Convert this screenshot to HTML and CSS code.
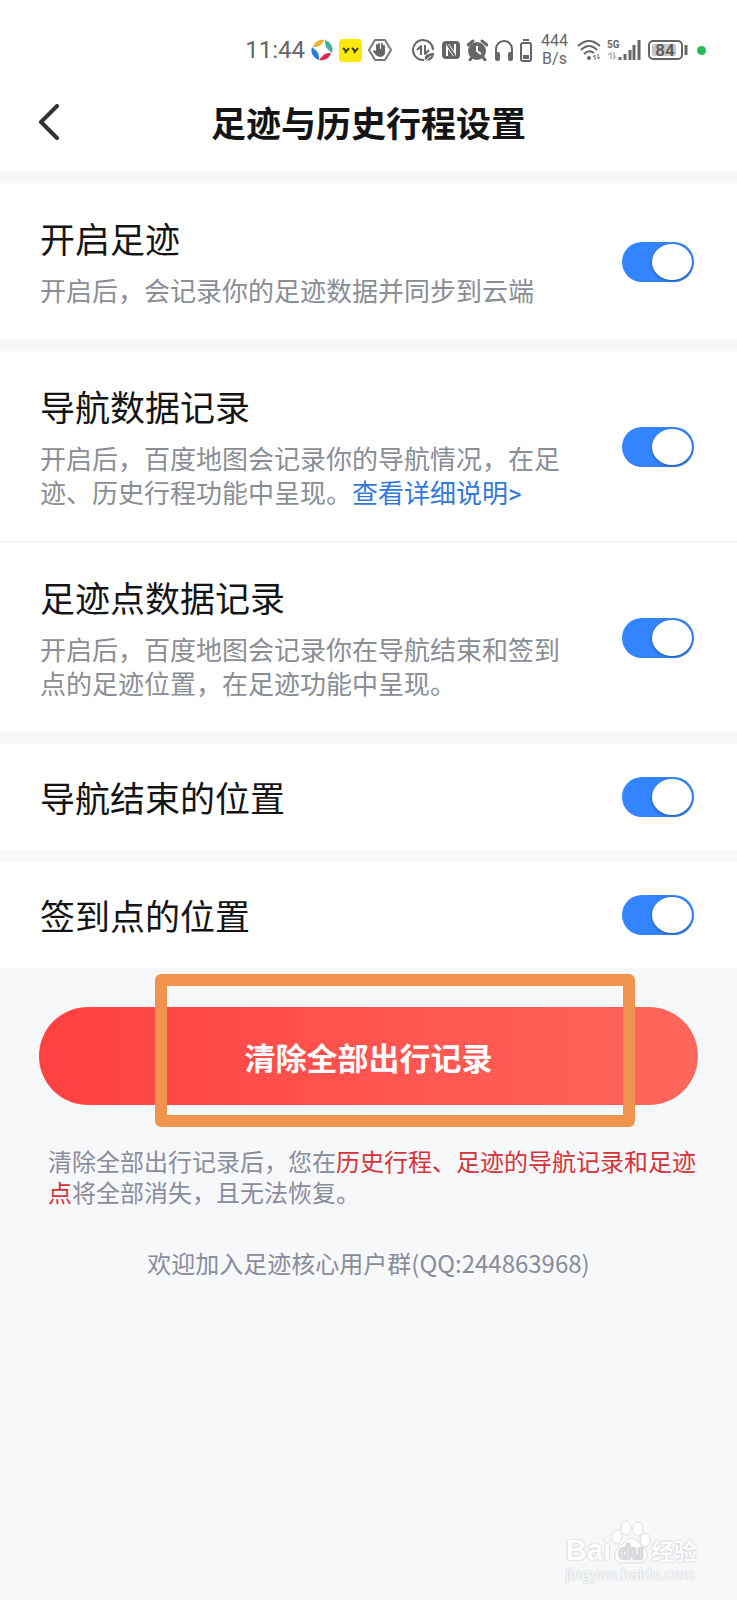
FILE: index.html
```
<!DOCTYPE html>
<html lang="zh-CN">
<head>
    <meta charset="UTF-8">
    <meta name="viewport" content="width=device-width, initial-scale=1.0">
    <title>足迹与历史行程设置</title>
    <link rel="stylesheet" href="styles.css">
</head>
<body>

<!-- Status bar -->
<div class="status-bar">
    <div class="status-group">
        <span class="clock">11:44</span>
        <svg width="22" height="22" viewBox="0 0 22 22">
            <path d="M2 8C4 2 9 0 14 1C12 3 10 6 8 7C6 8 4 8 2 8Z" fill="#e8b62c"/>
            <path d="M14 1C20 3 23 9 21 14C19 12 16 10 15 8C14 6 14 3 14 1Z" fill="#3fb39b"/>
            <path d="M20 14C18 20 13 22 8 21C10 19 12 16 14 15C16 14 18 14 20 14Z" fill="#e0224f"/>
            <path d="M8 21C2 19-1 13 1 8C3 10 6 12 7 14C8 16 8 19 8 21Z" fill="#2a7de0"/>
        </svg>
        <svg width="23" height="23" viewBox="0 0 23 23">
            <rect width="23" height="23" rx="4" fill="#fbe90c"/>
            <path d="M4 9L7 12M10 9L6 14M13 9L16 12M19 9L15 14" fill="none" stroke="#3a3210" stroke-width="2"/>
        </svg>
        <svg width="24" height="22" viewBox="0 0 24 22">
            <path d="M7 1H17L23 11L17 21H7L1 11Z" fill="none" stroke="#777" stroke-width="2" stroke-linejoin="round"/>
            <path d="M9 6V12M11 5V12M14 5V12M16 7V12" stroke="#666" stroke-width="2" stroke-linecap="round"/>
            <path d="M8 10H17V14Q16 18 12 18Q9 18 7 15L5 12L6 11L8 12Z" fill="#666"/>
        </svg>
    </div>
    <div class="status-group">
        <svg width="23" height="23" viewBox="0 0 23 23" fill="none" stroke="#666" stroke-width="2">
            <path d="M21 11A10 10 0 1 0 12 21"/>
            <path d="M5 11L9 7V16M13 6V15L17 11" stroke-linejoin="round"/>
            <path d="M13 21C12 16 16 14 22 14C22 20 17 23 13 21Z" fill="#666" stroke="none"/>
            <path d="M13 22L19 17" stroke="#fff" stroke-width="1"/>
        </svg>
        <svg width="20" height="20" viewBox="0 0 20 20">
            <rect x="1" y="1" width="18" height="18" rx="4" fill="#666"/>
            <path d="M5 4V16H7V9L12 16H15V4H13V11L8 4Z" fill="#fff"/>
            <path d="M6 4L14 16" stroke="#666" stroke-width="2"/>
        </svg>
        <svg width="21" height="22" viewBox="0 0 21 22">
            <circle cx="10" cy="12" r="9" fill="#666"/>
            <path d="M1 6L6 2M15 2L20 6M5 18L3 21M16 18L18 21" stroke="#666" stroke-width="3" stroke-linecap="round"/>
            <path d="M10 7V12L14 15" fill="none" stroke="#fff" stroke-width="2"/>
        </svg>
        <svg width="20" height="22" viewBox="0 0 20 22">
            <path d="M2 16V10A8 8 0 0 1 18 10V16" fill="none" stroke="#666" stroke-width="2"/>
            <rect x="1" y="13" width="5" height="9" rx="2" fill="#666"/>
            <rect x="14" y="13" width="5" height="9" rx="2" fill="#666"/>
        </svg>
        <svg width="12" height="23" viewBox="0 0 12 23">
            <path d="M3 1H9" stroke="#666" stroke-width="2"/>
            <rect x="1" y="4" width="10" height="18" rx="2" fill="none" stroke="#666" stroke-width="2"/>
            <rect x="3" y="16" width="6" height="4" fill="#666"/>
        </svg>
    </div>
    <span class="net-speed">444<br>B/s</span>
    <div class="status-group">
        <svg width="24" height="22" viewBox="0 0 24 22" fill="none" stroke="#666" stroke-width="2">
            <path d="M1 7Q12-3 23 7M4 11Q12 3 20 11M7 15Q12 10 17 14"/>
            <circle cx="12" cy="19" r="2" fill="#666" stroke="none"/>
            <path d="M16 18L18 16V21M21 15V20L23 18" stroke-width="1"/>
        </svg>
        <svg width="34" height="22" viewBox="0 0 34 22">
            <text x="0" y="9" class="net-type">5G</text>
            <path d="M1 16L4 14V20M7 13V19L9 17" fill="none" stroke="#c4c4c4" stroke-width="2"/>
            <path d="M13 18V21M18 15V21M23 11V21M27 6V21M32 1V21" stroke="#666" stroke-width="3"/>
        </svg>
    </div>
    <svg width="40" height="22" viewBox="0 0 40 22">
        <rect x="1" y="2" width="33" height="18" rx="4" fill="none" stroke="#666" stroke-width="2"/>
        <rect x="4" y="5" width="24" height="12" rx="2" fill="#c6c6c6"/>
        <path d="M38 6V16" stroke="#666" stroke-width="3"/>
        <text x="17" y="17" text-anchor="middle" class="battery-level">84</text>
    </svg>
    <span class="active-dot"></span>
</div>

<!-- Page header -->
<header class="page-header">
    <button class="back-btn" aria-label="返回">
        <svg width="22" height="36" viewBox="0 0 22 36">
            <path d="M19 2L3 18L19 34" fill="none" stroke="#333" stroke-width="4" stroke-linecap="round" stroke-linejoin="round"/>
        </svg>
    </button>
    <h1>足迹与历史行程设置</h1>
</header>

<!-- Settings -->
<main class="settings">
    <section class="card">
        <div class="row">
            <div class="row-text">
                <label class="row-title" for="footprint">开启足迹</label>
                <p class="row-desc">开启后，会记录你的足迹数据并同步到云端</p>
            </div>
            <input type="checkbox" class="switch" id="footprint" checked>
        </div>
    </section>

    <section class="card">
        <div class="row">
            <div class="row-text">
                <label class="row-title" for="navigation">导航数据记录</label>
                <p class="row-desc">开启后，百度地图会记录你的导航情况，在足迹、历史行程功能中呈现。<a href="#">查看详细说明&gt;</a></p>
            </div>
            <input type="checkbox" class="switch" id="navigation" checked>
        </div>
        <div class="row">
            <div class="row-text">
                <label class="row-title" for="points">足迹点数据记录</label>
                <p class="row-desc">开启后，百度地图会记录你在导航结束和签到点的足迹位置，在足迹功能中呈现。</p>
            </div>
            <input type="checkbox" class="switch" id="points" checked>
        </div>
    </section>

    <section class="card">
        <div class="row row-small">
            <label class="row-title" for="nav-end">导航结束的位置</label>
            <input type="checkbox" class="switch" id="nav-end" checked>
        </div>
    </section>

    <section class="card">
        <div class="row row-small">
            <label class="row-title" for="checkin">签到点的位置</label>
            <input type="checkbox" class="switch" id="checkin" checked>
        </div>
    </section>
</main>

<!-- Clear records -->
<div class="clear-box">
    <button class="clear-btn">清除全部出行记录</button>
    <div class="highlight"></div>
</div>
<p class="note">清除全部出行记录后，您在<span class="warn">历史行程、足迹的导航记录和足迹点</span>将全部消失，且无法恢复。</p>
<p class="contact">欢迎加入足迹核心用户群(QQ:244863968)</p>

<!-- Watermark -->
<footer class="watermark">
    <div class="brand">
        <span class="brand-latin">Bai</span>
        <svg width="40" height="44" viewBox="0 0 40 44" fill="#fff" stroke="#dcdde0" stroke-width="1">
            <ellipse cx="6" cy="17" rx="5" ry="7"/>
            <ellipse cx="15" cy="8" rx="5" ry="7"/>
            <ellipse cx="27" cy="9" rx="5" ry="7"/>
            <ellipse cx="34" cy="20" rx="5" ry="7"/>
            <path d="M20 18C25 18 28 24 34 29C38 34 36 42 29 43C24 43 20 42 15 43C7 44 2 40 4 33C5 27 14 23 16 20Q18 18 20 18Z"/>
            <text x="20" y="39" text-anchor="middle" class="brand-du">du</text>
        </svg>
        <span class="brand-cn">经验</span>
    </div>
    <span class="brand-url">jingyan.baidu.com</span>
</footer>

</body>
</html>
```

FILE: styles.css
```
* {
    box-sizing: border-box;
}
body {
    font-family: "Noto Sans CJK SC", "Noto Sans", sans-serif;
    margin: 0;
    min-height: 100vh;
    display: flex;
    flex-direction: column;
    background-color: #f7f8fa;
    color: #141414;
}
h1, p {
    margin: 0;
}

/* Status bar */
.status-bar {
    display: flex;
    align-items: center;
    justify-content: flex-end;
    gap: 7px;
    padding: 32px 31px 0 0;
    background-color: #fff;
    color: #666;
    font-family: Roboto, sans-serif;
}
.status-group {
    display: flex;
    align-items: center;
    gap: 6px;
}
.status-group:first-child {
    margin-right: 13px;
}
.clock {
    font-size: 24px;
    line-height: 24px;
}
.net-speed {
    padding: 0 2px;
    font-size: 16px;
    line-height: 18px;
    text-align: center;
}
.net-type {
    font: bold 10px Roboto, sans-serif;
    fill: #666;
}
.battery-level {
    font: 500 17px Roboto, sans-serif;
    fill: #555;
}
.active-dot {
    width: 9px;
    height: 9px;
    margin-left: 2px;
    border-radius: 50%;
    background-color: #22bb55;
}

/* Header */
.page-header {
    display: grid;
    grid-template-columns: 60px 1fr 60px;
    align-items: center;
    height: 103px;
    padding-top: 4px;
    background-color: #fff;
}
.back-btn {
    display: flex;
    justify-content: flex-end;
    padding: 0;
    border: none;
    background: none;
    cursor: pointer;
}
h1 {
    text-align: center;
    font-size: 35px;
    font-weight: 700;
    line-height: 48px;
}

/* Settings */
.settings {
    display: flex;
    flex-direction: column;
    gap: 12px;
    padding-top: 12px;
}
.card {
    background-color: #fff;
}
.row {
    display: flex;
    align-items: center;
    justify-content: space-between;
    gap: 50px;
    padding: 31px 43px 30px 40px;
}
.row + .row {
    border-top: 1px solid #f2f3f5;
}
.row-small {
    padding-top: 29px;
    padding-bottom: 29px;
}
.row-title {
    display: block;
    font-size: 35px;
    line-height: 48px;
}
.row-desc {
    margin-top: 13px;
    font-family: Roboto, "Noto Sans CJK SC", sans-serif;
    font-size: 26px;
    line-height: 34px;
    color: #8a8d93;
}
.row-desc a {
    color: #3377dd;
    text-decoration: none;
}
.switch {
    appearance: none;
    flex: none;
    display: flex;
    align-items: center;
    width: 72px;
    height: 40px;
    margin: 0;
    padding: 0 2px;
    border-radius: 20px;
    background-color: #c8cbd0;
    cursor: pointer;
}
.switch::before {
    content: "";
    width: 40px;
    height: 36px;
    border-radius: 50%;
    background-color: #fff;
    box-shadow: 0 1px 3px rgba(0, 0, 0, 0.4);
}
.switch:checked {
    justify-content: flex-end;
    background-color: #3385ff;
}

/* Clear records */
.clear-box {
    position: relative;
    margin: 39px 39px 0;
}
.clear-btn {
    display: block;
    width: 100%;
    height: 98px;
    border: none;
    border-radius: 49px;
    background: linear-gradient(to right, #ff4141, #ff665c);
    color: #fff;
    font-family: inherit;
    font-size: 31px;
    font-weight: 700;
    cursor: pointer;
}
.highlight {
    position: absolute;
    top: -33px;
    right: 63px;
    bottom: -22px;
    left: 116px;
    border: 12px solid #f0934c;
    border-radius: 6px;
    pointer-events: none;
}
.note {
    padding: 43px 40px 0 48px;
    font-family: Roboto, "Noto Sans CJK SC", sans-serif;
    font-size: 24px;
    line-height: 31px;
    color: #8a8c9a;
}
.warn {
    color: #d83238;
}
.contact {
    padding-top: 37px;
    text-align: center;
    font-size: 24px;
    line-height: 31px;
    color: #8a8c9a;
}

/* Watermark */
.watermark {
    align-self: flex-end;
    margin-top: auto;
    padding: 0 40px 15px 0;
    color: #fff;
    font-family: "Liberation Sans", "Noto Sans CJK SC", sans-serif;
    text-shadow: 0 0 2px #c4c6ca, 0 0 1px #c4c6ca;
}
.brand {
    display: flex;
    align-items: flex-end;
}
.brand-latin {
    font-size: 29px;
    font-weight: bold;
    line-height: 27px;
}
.brand-du {
    font: bold 20px "Liberation Sans", sans-serif;
}
.brand-cn {
    font-size: 23px;
    font-weight: bold;
    line-height: 24px;
}
.brand-url {
    display: block;
    font-size: 16px;
    line-height: 21px;
}
```
